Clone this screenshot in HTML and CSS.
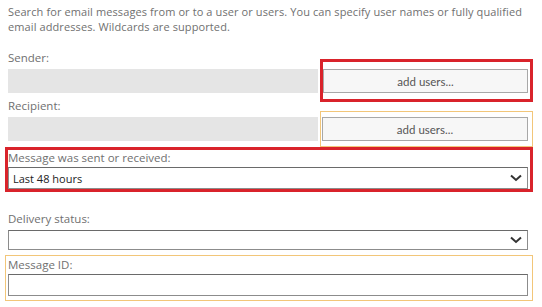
FILE: index.html
```html
<!DOCTYPE html>
<html lang="en">
<head>
    <meta charset="UTF-8">
    <title>Message Trace</title>
    <link rel="stylesheet" href="styles.css">
</head>
<body>
    <div class="form">
        <p class="intro">Search for email messages from or to a user or users. You can specify user names or fully qualified email addresses. Wildcards are supported.</p>

        <div class="pick-row sender-row">
            <div class="pick-main">
                <label class="lbl">Sender:</label>
                <div class="picked"></div>
            </div>
            <div class="pick-box hl-red">
                <button class="add-btn">add users...</button>
            </div>
        </div>

        <div class="pick-row">
            <div class="pick-main">
                <label class="lbl">Recipient:</label>
                <div class="picked"></div>
            </div>
            <div class="pick-box hl-orange">
                <button class="add-btn">add users...</button>
            </div>
        </div>

        <div class="field hl-red date-field">
            <label class="lbl">Message was sent or received:</label>
            <div class="select">
                <span>Last 48 hours</span>
                <svg class="chev" width="12" height="8" viewBox="0 0 12 8"><path d="M1 1.5 L6 6 L11 1.5" fill="none" stroke="#333" stroke-width="2"/></svg>
            </div>
        </div>

        <div class="field status-field">
            <label class="lbl">Delivery status:</label>
            <div class="select short">
                <span></span>
                <svg class="chev" width="12" height="8" viewBox="0 0 12 8"><path d="M1 1.5 L6 6 L11 1.5" fill="none" stroke="#333" stroke-width="2"/></svg>
            </div>
        </div>

        <div class="field hl-orange id-field">
            <label class="lbl">Message ID:</label>
            <input class="text-input" type="text">
        </div>
    </div>
</body>
</html>
```

FILE: styles.css
```css
body {
    margin: 0;
    font-family: "Open Sans", Lato, sans-serif;
    font-size: 11px;
    color: #707070;
    background: #fff;
}
.form {
    padding: 4px 9px 0 5px;
}
.intro {
    margin: 0 0 16px;
    padding: 0 3px;
    line-height: 15px;
    letter-spacing: 0.1px;
}
.lbl {
    display: block;
    line-height: 16px;
    font-size: 11.5px;
}
.pick-row {
    display: flex;
    gap: 2px;
    padding-left: 3px;
}
.sender-row {
    margin-bottom: -4px;
}
.pick-main {
    flex: 1;
}
.pick-main .lbl {
    margin-bottom: 3px;
}
.picked {
    height: 24px;
    background: #e5e5e5;
}
.pick-box {
    width: 213px;
    box-sizing: border-box;
}
.pick-box.hl-red {
    margin-top: 9px;
    height: 43px;
    padding: 7px 2px 0 0;
}
.pick-box.hl-orange {
    margin-top: 13px;
    height: 36px;
    padding: 5px 4px 0 1px;
}
.hl-red {
    border: 3px solid #d9232b;
}
.hl-orange {
    border: 1px solid #f2c679;
}
.add-btn {
    display: block;
    width: 100%;
    height: 24px;
    border: 1px solid #a8a8a8;
    background: #f7f7f7;
    color: #555;
    font-family: Lato, "Open Sans", sans-serif;
    font-size: 11.5px;
    padding: 0;
}
.field {
    padding: 0 5px 0 3px;
}
.select {
    display: flex;
    align-items: center;
    justify-content: space-between;
    box-sizing: border-box;
    height: 22px;
    border: 1px solid #8c8c8c;
    border-top-color: #6a6a6a;
    background: #fff;
    padding: 0 5px 0 4px;
    color: #222;
    font-size: 11px;
}
.select.short {
    height: 20px;
}
.date-field {
    padding: 0 2px 0 0;
}
.date-field .select {
    margin-top: 1px;
}
.status-field {
    margin-top: 19px;
}
.status-field .lbl {
    margin-bottom: 3px;
}
.id-field {
    margin-top: 5px;
    padding: 1px 4px 4px 2px;
}
.id-field .lbl {
    margin-bottom: 1px;
}
.text-input {
    display: block;
    box-sizing: border-box;
    width: 100%;
    height: 22px;
    margin: 0;
    border: 1px solid #8c8c8c;
    border-top-color: #6a6a6a;
    background: #fff;
}
```
